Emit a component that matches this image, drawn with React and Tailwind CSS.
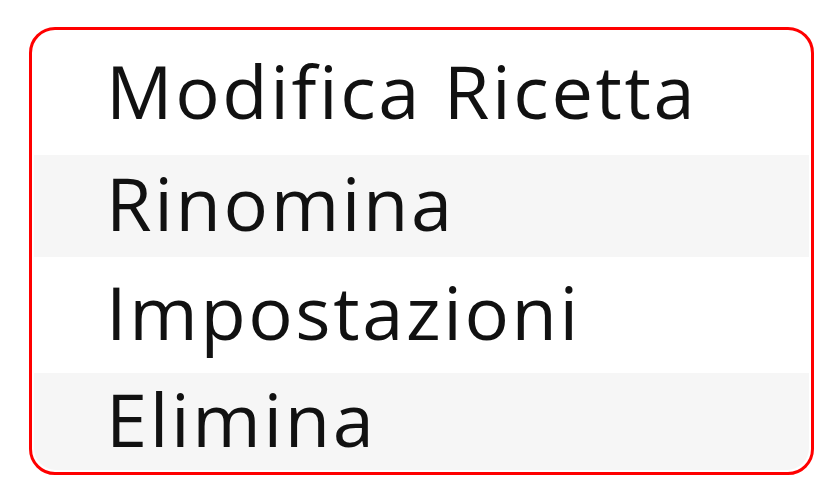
export default function App() {
  const items = [
    { label: "Modifica Ricetta", h: "h-[123px]", bg: "bg-white" },
    { label: "Rinomina", h: "h-[102px]", bg: "bg-[#f6f6f6]" },
    { label: "Impostazioni", h: "h-[116px]", bg: "bg-white" },
    { label: "Elimina", h: "h-[97px]", bg: "bg-[#f6f6f6]" },
  ];

  return (
    <div className="w-[837px] h-[491px] bg-white pt-[27px] pl-[29px]">
      <div className="w-[785px] border-[3px] border-[#ff0000] rounded-[26px] bg-white p-[2px]">
        <ul className="flex flex-col rounded-[22px] overflow-hidden">
          {items.map((item) => (
            <li
              key={item.label}
              className={`flex items-center pl-[72px] pb-[6px] ${item.h} ${item.bg} text-[#111111] text-[74px] leading-none tracking-[2.6px] font-['Open_Sans',sans-serif]`}
            >
              {item.label}
            </li>
          ))}
        </ul>
      </div>
    </div>
  );
}
